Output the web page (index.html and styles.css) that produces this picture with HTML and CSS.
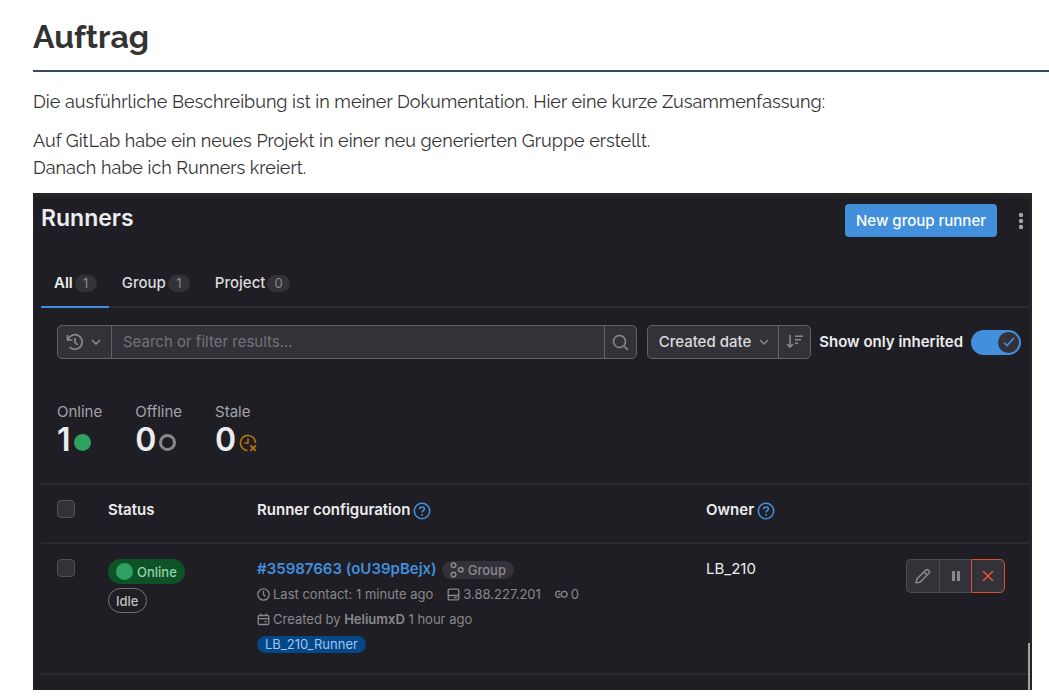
FILE: index.html
```html
<!DOCTYPE html>
<html lang="de">
<head>
<meta charset="utf-8">
<title>Auftrag</title>
<link rel="stylesheet" href="styles.css">
</head>
<body>
<main class="article">
  <h1 class="title">Auftrag</h1>
  <p class="text">Die ausführliche Beschreibung ist in meiner Dokumentation. Hier eine kurze Zusammenfassung:</p>
  <p class="text">Auf GitLab habe ein neues Projekt in einer neu generierten Gruppe erstellt.<br>Danach habe ich Runners kreiert.</p>

  <section class="panel" lang="en">
    <header class="panel-head">
      <h2 class="panel-title">Runners</h2>
      <button class="primary" type="button">New group runner</button>
      <button class="kebab" type="button" aria-label="More actions">
        <svg width="6" height="18" viewBox="0 0 6 18" fill="currentColor"><circle cx="3" cy="3" r="2.2"/><circle cx="3" cy="9" r="2.2"/><circle cx="3" cy="15" r="2.2"/></svg>
      </button>
    </header>

    <nav class="tabs">
      <a class="tab tab-active" href="#all">All <span class="count">1</span></a>
      <a class="tab" href="#group">Group <span class="count">1</span></a>
      <a class="tab" href="#project">Project <span class="count">0</span></a>
    </nav>

    <div class="filters">
      <div class="group search">
        <button class="seg history" type="button" aria-label="Search history">
          <svg width="18" height="18" viewBox="0 0 18 18" fill="none" stroke="currentColor" stroke-width="1.7"><path d="M1.5 2v5h5M2 6.6A7.3 7.3 0 1 1 3.6 14"/><path d="M9 5v4.500l2.600 2.400"/></svg>
          <svg width="10" height="6" viewBox="0 0 10 6" fill="none" stroke="currentColor" stroke-width="1.7"><path d="M1 1l4 4 4-4"/></svg>
        </button>
        <input class="search-input" type="text" aria-label="Search or filter results" placeholder="Search or filter results...">
        <button class="seg square" type="button" aria-label="Search">
          <svg width="17" height="17" viewBox="0 0 17 17" fill="none" stroke="currentColor" stroke-width="1.6"><circle cx="7.5" cy="7.5" r="6"/><path d="M12 12l4 4"/></svg>
        </button>
      </div>
      <div class="group">
        <button class="seg sort" type="button">Created date
          <svg width="10" height="6" viewBox="0 0 10 6" fill="none" stroke="currentColor" stroke-width="1.4"><path d="M1 1l4 4 4-4"/></svg>
        </button>
        <button class="seg square" type="button" aria-label="Sort direction">
          <svg width="18" height="16" viewBox="0 0 18 16" fill="none" stroke="currentColor" stroke-width="1.6"><path d="M4 1v12M1 10l3 3.2L7 10M9 2.2h8M9 5.7h6M9 9.2h3"/></svg>
        </button>
      </div>
      <label class="inherit">Show only inherited
        <input class="toggle-input" type="checkbox" checked>
        <span class="toggle"><span class="knob"><svg width="12" height="10" viewBox="0 0 12 10" fill="none" stroke="currentColor" stroke-width="1.7"><path d="M1 5.5l3 3L11 1"/></svg></span></span>
      </label>
    </div>

    <div class="stats">
      <div class="stat"><span class="stat-name">Online</span><span class="stat-value">1<span class="dot"></span></span></div>
      <div class="stat"><span class="stat-name">Offline</span><span class="stat-value">0<span class="ring"></span></span></div>
      <div class="stat"><span class="stat-name">Stale</span><span class="stat-value">0<svg class="stale" width="18" height="18" viewBox="0 0 18 18" fill="none" stroke="currentColor" stroke-width="1.6"><path d="M8.4 16.6A7.6 7.6 0 1 1 16.6 9"/><path d="M9 4.4V9H5.4"/><path d="M11.4 11.4l5.4 5.4M16.8 11.4l-5.4 5.4" stroke-width="1.9"/></svg></span></div>
    </div>

    <table class="runners">
      <colgroup><col class="c-check"><col class="c-status"><col class="c-config"><col class="c-owner"><col class="c-actions"></colgroup>
      <thead>
        <tr>
          <th><input class="check" type="checkbox" aria-label="Select all"></th>
          <th>Status</th>
          <th><span class="th-line">Runner configuration <svg class="help" width="18" height="18" viewBox="0 0 18 18" fill="none" stroke="currentColor" stroke-width="1.6"><circle cx="9" cy="9" r="7.7"/><path d="M6.6 7.2C6.7 4.2 11.4 4.4 11.4 7 11.4 8.700 9 8.600 9 10.600M9 12v1.800"/></svg></span></th>
          <th><span class="th-line">Owner <svg class="help" width="18" height="18" viewBox="0 0 18 18" fill="none" stroke="currentColor" stroke-width="1.6"><circle cx="9" cy="9" r="7.7"/><path d="M6.6 7.2C6.7 4.2 11.4 4.4 11.4 7 11.4 8.700 9 8.600 9 10.600M9 12v1.800"/></svg></span></th>
          <th></th>
        </tr>
      </thead>
      <tbody>
        <tr>
          <td><input class="check" type="checkbox" aria-label="Select runner"></td>
          <td>
            <div class="badges">
              <span class="badge online"><span class="dot"></span>Online</span>
              <span class="badge idle">Idle</span>
            </div>
          </td>
          <td>
            <div class="config">
              <div class="name-line">
                <a class="runner-link" href="#runner">#35987663 (oU39pBejx)</a>
                <span class="type"><svg width="14" height="16" viewBox="0 0 14 16" fill="none" stroke="currentColor" stroke-width="1.5"><circle cx="3.500" cy="3.200" r="2.300"/><circle cx="3.500" cy="12.600" r="2.300"/><circle cx="10.800" cy="7.800" r="2.300"/></svg>Group</span>
              </div>
              <div class="meta">
                <span class="item"><svg width="13" height="13" viewBox="0 0 13 13" fill="none" stroke="currentColor" stroke-width="1.3"><circle cx="6.500" cy="6.500" r="5.700"/><path d="M6.500 3v3.700l1.900 1.800"/></svg>Last contact: 1 minute ago</span>
                <span class="item"><svg width="13" height="13" viewBox="0 0 13 13" fill="none" stroke="currentColor" stroke-width="1.3"><rect x="1.200" y="1.200" width="10.600" height="10.600" rx="1.300"/><path d="M1 7.500h11M7 9.700h3"/></svg>3.88.227.201</span>
                <span class="item"><svg width="13" height="13" viewBox="0 0 13 13" fill="none" stroke="currentColor" stroke-width="1.3"><path d="M5.400 3.900A3 3 0 1 0 5.400 8.600M2.800 6.300h2.800"/><circle cx="9.200" cy="6.300" r="2.900"/></svg>0</span>
              </div>
              <div class="meta">
                <span class="item"><svg width="13" height="13" viewBox="0 0 13 13" fill="none" stroke="currentColor" stroke-width="1.3"><rect x="1.200" y="2.500" width="10.600" height="9" rx="1"/><path d="M1 5.700h11M3.700 .5v2M9.300 .5v2M7.500 8.500h2"/></svg><span>Created by <b>HeliumxD</b> 1 hour ago</span></span>
              </div>
              <span class="tag">LB_210_Runner</span>
            </div>
          </td>
          <td>LB_210</td>
          <td>
            <div class="actions">
              <button class="act" type="button" aria-label="Edit"><svg width="16" height="16" viewBox="0 0 16 16" fill="none" stroke="currentColor" stroke-width="1.5" stroke-linejoin="round"><path d="M1.200 14.800l.6-3.800 8.900-8.900a1.700 1.700 0 0 1 2.400 0l.8.8a1.700 1.700 0 0 1 0 2.400L5 14.200zM9 3.900L12.100 7"/></svg></button>
              <button class="act" type="button" aria-label="Pause"><svg width="10" height="12" viewBox="0 0 10 12" fill="currentColor"><rect x="1" y="1" width="3" height="10" rx=".6"/><rect x="6" y="1" width="3" height="10" rx=".6"/></svg></button>
              <button class="act danger" type="button" aria-label="Delete"><svg width="12" height="12" viewBox="0 0 12 12" fill="none" stroke="currentColor" stroke-width="1.700"><path d="M1 1l10 10M11 1L1 11"/></svg></button>
            </div>
          </td>
        </tr>
      </tbody>
    </table>
    <span class="scrollbar"></span>
  </section>
</main>
</body>
</html>
```
FILE: styles.css
```css
* { box-sizing: border-box; }

body {
  margin: 0;
  background: #fff;
  color: #333;
  font-family: Raleway, Lato, "Open Sans", sans-serif;
  font-size: 18px;
  line-height: 27px;
}

button, input { font: inherit; color: inherit; margin: 0; }
button { border: 0; background: none; padding: 0; display: flex; align-items: center; justify-content: center; }
svg { display: block; flex: none; }

.article { padding: 12px 0 9px 33px; }

.title {
  margin: 0 0 16px;
  padding-bottom: 8px;
  border-bottom: 2px solid #34495e;
  font-size: 32px;
  line-height: 50px;
  font-weight: 700;
}

.text { margin: 0 0 12px; }

.panel {
  position: relative;
  margin-right: 17px;
  padding: 0 0 15px 8px;
  border-top: 5px solid #252525;
  border-right: 3px solid #252525;
  background: #1f1e24;
  color: #ececef;
  font-family: Inter, sans-serif;
  font-size: 15px;
  line-height: 20px;
}

.panel-head { display: flex; align-items: center; padding: 6px 5px 0 0; }
.panel-title { flex: 1; margin: 0; padding-bottom: 4px; font-size: 23px; line-height: 29px; font-weight: 600; }
.primary { height: 33px; padding: 0 11px; border-radius: 4px; background: #428fdc; color: #fff; font-weight: 500; }
.kebab { margin-left: 21px; color: #a4a3a8; }

.tabs { display: flex; margin-top: 21px; border-bottom: 2px solid #2b2a31; }
.tab {
  display: flex;
  align-items: center;
  gap: 2px;
  height: 50px;
  margin-bottom: -2px;
  padding: 0 12px 0 13px;
  color: #dcdcde;
  text-decoration: none;
  font-weight: 500;
}
.tab-active { font-weight: 600; color: #ececef; border-bottom: 2px solid #428fdc; padding-top: 2px; }
.count { min-width: 22px; padding: 0 7px; border-radius: 9px; background: #333238; color: #89888d; font-size: 13px; line-height: 17px; font-weight: 400; text-align: center; }

.filters { display: flex; align-items: center; gap: 8px; padding: 17px 8px 0 16px; }
.group { display: flex; height: 34px; border: 1px solid #626168; border-radius: 5px; background: #333238; }
.search { flex: 1; margin-right: 2px; }
.seg { color: #89888d; }
.seg + .seg, .search-input, .search-input + .seg { border: 0; border-left: 1px solid #626168; }
.history { width: 53px; gap: 7px; padding-right: 3px; }
.search-input { flex: 1; min-width: 0; padding: 0 11px; background: none; outline: 0; }
.search-input::placeholder { color: #737278; opacity: 1; }
.square { width: 32px; }
.sort { padding: 0 9px 0 11px; gap: 8px; color: #dcdcde; font-weight: 500; }
.sort svg { color: #89888d; }
.inherit { display: flex; align-items: center; gap: 8px; font-weight: 600; white-space: nowrap; }
.toggle-input { position: absolute; opacity: 0; }
.toggle { display: flex; justify-content: flex-end; width: 50px; padding: 2px; border-radius: 13px; background: #428fdc; }
.knob { display: flex; align-items: center; justify-content: center; width: 21px; height: 21px; border-radius: 50%; background: #333238; color: #428fdc; }

.stats { display: flex; gap: 33px; padding: 43px 16px 25px; }
.stat { display: flex; flex-direction: column; }
.stat-name { color: #a4a3a8; }
.stat-value { display: flex; align-items: center; gap: 3px; font-size: 32px; line-height: 36px; font-weight: 600; }
.dot, .ring { flex: none; width: 17px; height: 17px; border-radius: 50%; }
.dot { background: #2da160; }
.ring { border: 3px solid #89888d; }
.stat-value .dot, .stat-value .ring, .stale { margin-top: 5px; }
.stale { color: #b87308; }

.runners { width: 100%; table-layout: fixed; border-collapse: collapse; }
.runners tr { border-top: 2px solid #2b2a31; }
.runners tbody tr { border-bottom: 2px solid #2b2a31; }
.c-check { width: 67px; }
.c-status { width: 149px; }
.c-config { width: 449px; }
.c-owner { width: 200px; }
th, td { padding: 0; text-align: left; vertical-align: top; }
th { height: 59px; padding-top: 15px; font-weight: 600; }
td { height: 131px; padding-top: 15px; }
.th-line { display: flex; align-items: center; gap: 3px; }
.help { color: #428fdc; margin-top: 2px; }
.check { appearance: none; display: block; width: 18px; height: 18px; margin-left: 16px; border: 1px solid #535158; border-radius: 4px; background: #333238; }

.badges { display: flex; flex-direction: column; align-items: flex-start; gap: 4px; }
.badge { display: flex; align-items: center; gap: 4px; height: 25px; border-radius: 13px; font-size: 13px; font-weight: 500; }
.online { padding: 0 8px; background: #0e5328; color: #91d4a8; }
.idle { padding: 0 7px; border: 1px solid #737278; color: #bfbfc3; }

.config { display: flex; flex-direction: column; align-items: flex-start; }
.name-line { display: flex; align-items: center; gap: 5px; height: 20px; }
.runner-link { color: #428fdc; font-weight: 600; text-decoration: none; }
.type { display: flex; align-items: center; gap: 4px; height: 18px; margin-top: 2px; padding: 0 8px; border-radius: 9px; background: #333238; color: #89888d; font-size: 13px; font-weight: 500; }
.meta { display: flex; gap: 14px; padding-top: 5px; color: #89888d; font-size: 13px; }
.item { display: flex; align-items: center; gap: 3px; white-space: nowrap; }
.item b { font-weight: 600; }
.tag { margin-top: 7px; padding: 0 8px; border-radius: 9px; background: #064787; color: #9dc7f1; font-size: 13px; line-height: 17px; }

.actions { display: flex; width: 99px; }
.act { flex: 1; height: 34px; border: 1px solid #4c4b51; border-right-width: 0; background: #333238; color: #89888d; }
.act:first-child { border-radius: 5px 0 0 5px; }
.danger { border: 1px solid #dd4b34; border-radius: 0 5px 5px 0; color: #e0523a; }

.scrollbar { position: absolute; right: -1px; bottom: 0; width: 2px; height: 47px; background: #a4a3a8; }
```
